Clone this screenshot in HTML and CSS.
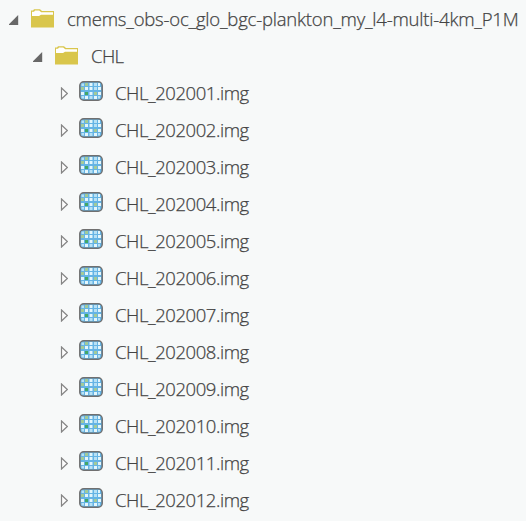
FILE: index.html
```
<!DOCTYPE html>
<html lang="en">
<head>
<meta charset="utf-8">
<title>Catalog</title>
<link rel="stylesheet" href="styles.css">
</head>
<body>
<svg width="0" height="0" class="defs">
  <symbol id="open" viewBox="0 0 10 10"><path d="M9.2 0V10H0V9.2Z" fill="#686868"/></symbol>
  <symbol id="closed" viewBox="0 0 8 13"><path d="M1.5 1V12L7.3 6.5Z" fill="#fcfcfc" stroke="#858585" stroke-width="1.2"/></symbol>
  <symbol id="folder" viewBox="0 0 24 19">
    <path d="M0 1.5H2L3 .3H9L11 2H23V18.5H0Z" fill="#d9c64c"/>
    <path d="M1 2.8H3L4 1.4H8.2L10.2 3.2H22V5.8H10L8 7H1Z" fill="#fff"/>
  </symbol>
  <symbol id="raster" viewBox="0 0 24 20">
    <rect x=".8" y=".8" width="22.4" height="18.4" rx="4" fill="#65b4e5" stroke="#707070" stroke-width="1.5"/>
    <g fill="#e3f6fc">
      <path d="M10.5 2h3v3h-3zM19 2h2v3h-2zM6 6h3v3h-3zM10.5 6h3v3h-3zM19 6h3v3h-3zM2 11h3v3H2zM10.5 11h3v3h-3zM19 11h3v3h-3zM6 15h3v3h-3zM15 15h3v3h-3z"/>
    </g>
    <path d="M2.5 2.5h2.5v2.5h-2.5zM15 2h3v3h-3zM15 6h3v3h-3zM2.5 15h2.5v2.5h-2.5zM10.5 15h3v3h-3zM19 15h2v2.5h-2z" fill="#b7e1f5"/>
    <path d="M6 2h3v3h-3zM2 6h3v3H2zM15 11h3v3h-3z" fill="#a3cb98"/>
    <path d="M6 11h3v3H6z" fill="#43a866"/>
  </symbol>
</svg>
<main id="tree" class="tree">
  <div class="row root"><svg class="open"><use href="#open"/></svg><svg class="folder"><use href="#folder"/></svg><span class="label path">cmems_obs-oc_glo_bgc-plankton_my_l4-multi-4km_P1M</span></div>
  <div class="row group"><svg class="open"><use href="#open"/></svg><svg class="folder"><use href="#folder"/></svg><span class="label chl">CHL</span></div>
</main>
<script src="tree.js"></script>
</body>
</html>
```
FILE: styles.css
```
body {
  margin: 0;
  background: #f7f9f9;
  color: #444;
  font: 350 18.5px/35px "Open Sans", "Noto Sans", sans-serif;
  -webkit-text-stroke: 0.25px #444;
}
.defs { position: absolute; }
.tree { padding-top: 1px; }
.row { display: flex; align-items: center; height: 37px; white-space: nowrap; }
.row svg { flex: none; }
.root { padding-left: 9px; }
.group { padding-left: 33px; }
.item { padding-left: 60px; }
.open { width: 10px; height: 10px; margin-right: 12px; }
.folder { width: 24px; height: 19px; margin: 0 12px 2px 0; }
.closed { width: 8px; height: 13px; margin-right: 11px; }
.raster { width: 24px; height: 20px; margin: 0 12px 5px 0; }
.label { padding-bottom: 2px; letter-spacing: -0.6px; }
.path { letter-spacing: -0.2px; }
.file { letter-spacing: -0.43px; }
```
FILE: tree.js
```
const tree = document.getElementById("tree");
for (let month = 1; month <= 12; month++) {
  const row = document.createElement("div");
  row.className = "row item";
  row.innerHTML = '<svg class="closed"><use href="#closed"/></svg><svg class="raster"><use href="#raster"/></svg><span class="label file"></span>';
  row.querySelector(".label").textContent = `CHL_2020${String(month).padStart(2, "0")}.img`;
  tree.append(row);
}
```
